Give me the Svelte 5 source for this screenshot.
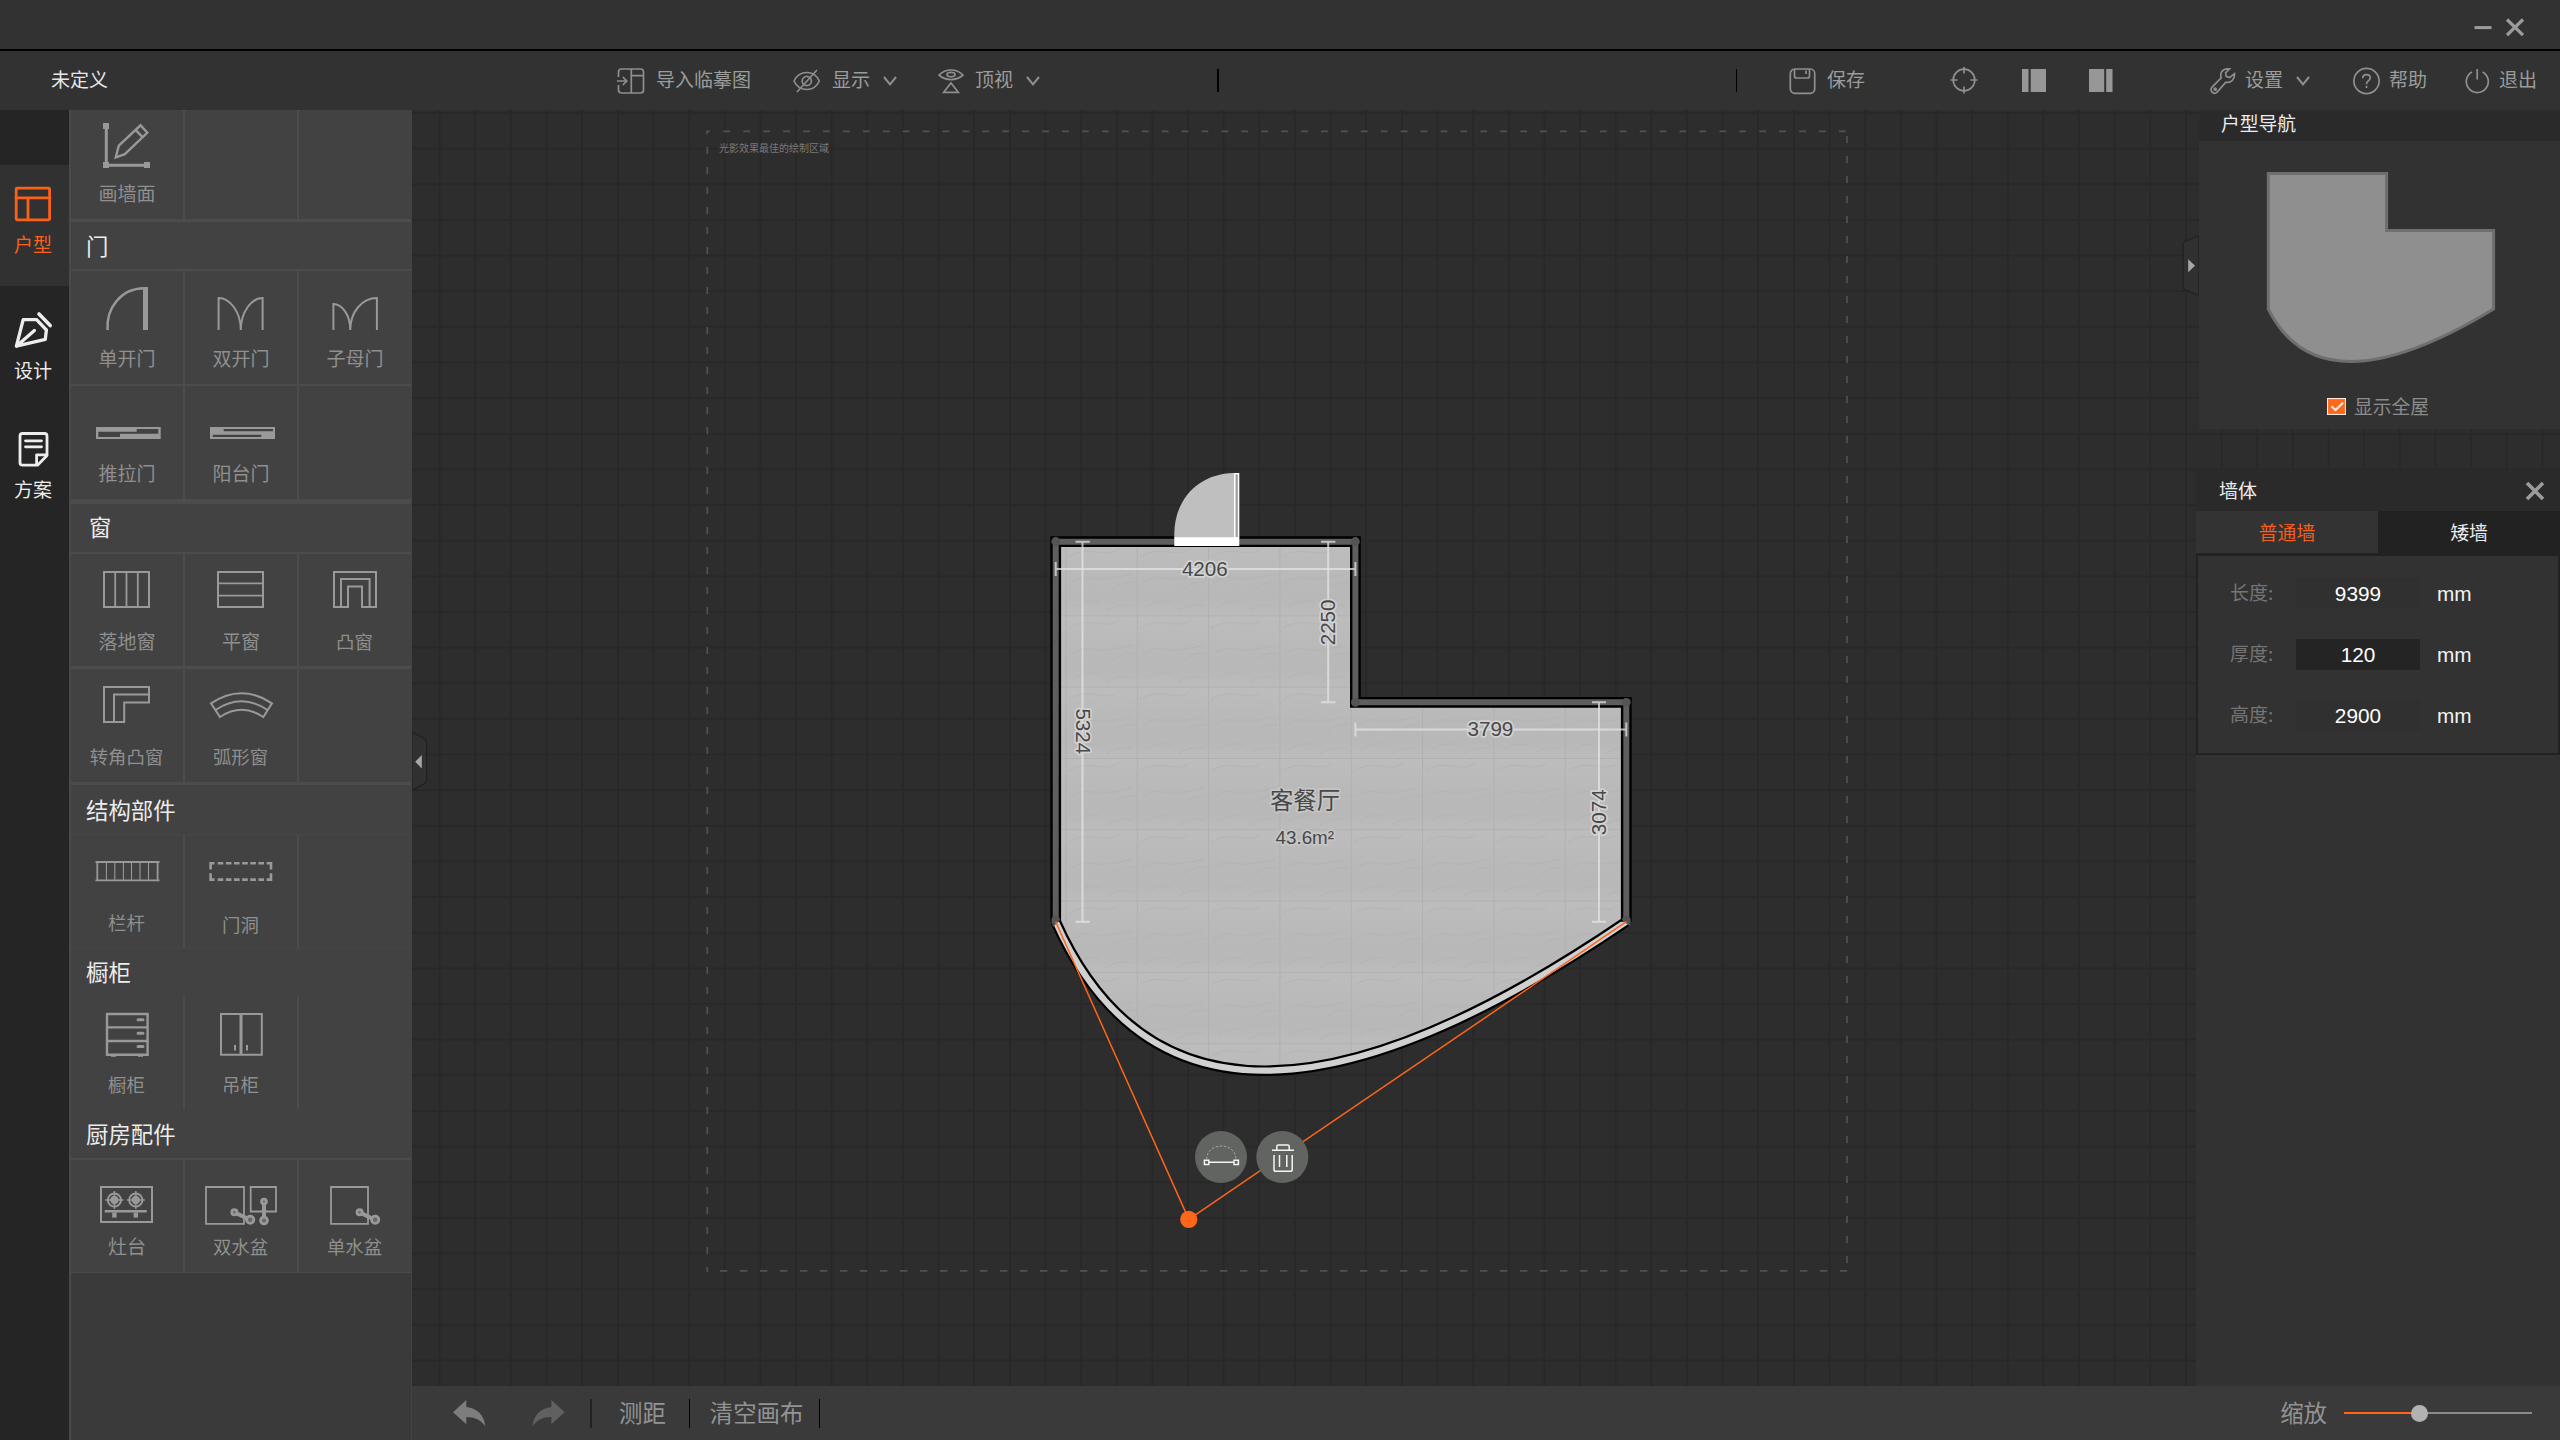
<script>
  const sections = [
    {
      title: '',
      rows: [{ h: 109, icon: 72, end: 3, cells: [{ id: 'draw', label: '画墙面' }, null, null] }]
    },
    {
      title: '门',
      headH: 47,
      line: 2,
      rows: [
        { h: 113, icon: 76, end: 2, cells: [{ id: 'door', label: '单开门' }, { id: 'double', label: '双开门' }, { id: 'mother', label: '子母门' }] },
        { h: 113, icon: 76, end: 5, cells: [{ id: 'slide', label: '推拉门' }, { id: 'balcony', label: '阳台门' }, null] }
      ]
    },
    {
      title: '窗',
      indent: true,
      headH: 48,
      line: 2,
      rows: [
        { h: 112, icon: 76, end: 3, cells: [{ id: 'french', label: '落地窗' }, { id: 'flat', label: '平窗' }, { id: 'bay', label: '凸窗', tight: true }] },
        { h: 113, icon: 76, end: 3, cells: [{ id: 'corner', label: '转角凸窗', tight: true }, { id: 'arc', label: '弧形窗', tight: true }, null] }
      ]
    },
    {
      title: '结构部件',
      headH: 49,
      line: 1,
      rows: [{ h: 113, icon: 76, end: 1, faint: true, cells: [{ id: 'rail', label: '栏杆', tight: true }, { id: 'opening', label: '门洞', tight: true, low: true }, null] }]
    },
    {
      title: '橱柜',
      raised: true,
      headH: 48,
      line: 0,
      rows: [{ h: 112, icon: 76, end: 0, cells: [{ id: 'cabinet', label: '橱柜', tight: true }, { id: 'wallcab', label: '吊柜', tight: true }, null] }]
    },
    {
      title: '厨房配件',
      headH: 49,
      line: 2,
      rows: [{ h: 112, icon: 75, end: 1, cells: [{ id: 'stove', label: '灶台' }, { id: 'sink2', label: '双水盆', tight: true }, { id: 'sink1', label: '单水盆', tight: true }] }]
    }
  ];

  const fields = [
    { label: '长度:', value: '9399' },
    { label: '厚度:', value: '120', editable: true },
    { label: '高度:', value: '2900' }
  ];

  const zoom = 40;
</script>

{#snippet chevron()}
  <svg class="chev" width="14" height="10" viewBox="0 0 14 10"><path d="M1 1L7 8.4L13 1" /></svg>
{/snippet}

{#snippet toolIcon(id)}
  {#if id === 'draw'}
    <path d="M35.3 16V55.3H76" stroke-width="3" />
    <path class="solid" d="M32 13h6v6h-6zM32 52h6v6h-6zM73 52h6v6h-6z" />
    <path d="M44.8 47.3L47.8 35.6L69.5 15.3L76.3 22.8L53.8 44.2ZM64.5 19.8L71.6 27.2" stroke-width="2.4" />
  {:else if id === 'door'}
    <path class="solid" d="M72 16h5v43h-5z" />
    <path d="M36.6 59C35 37 50 17.5 73 17.3" stroke-width="2.5" />
  {:else if id === 'double'}
    <path d="M33.6 59V27C45 27 55.8 41 55.8 59C55.8 41 66.5 27 77.6 27V59" />
  {:else if id === 'mother'}
    <path d="M34.4 59V33C43 33 51.3 44 51.3 59C51.3 41 63 27 77.9 27V59" />
  {:else if id === 'slide'}
    <path class="solid" fill-rule="evenodd" d="M25 41H89.7V53H25ZM65.7 43V45.7H27.3V51H49V47.7H87.3V43Z" />
  {:else if id === 'balcony'}
    <path class="solid" fill-rule="evenodd" d="M25 41H90V53H25ZM38.7 43V45.3H88V43ZM27.7 48.7V51H76.3V48.7Z" />
  {:else if id === 'french'}
    <path d="M33 18H78V53H33Z" />
    <path d="M44.2 18V53M55.5 18V53M66.8 18V53" stroke-width="1.8" />
  {:else if id === 'flat'}
    <path d="M33 18H78V53H33Z" />
    <path d="M33 29.3H78M33 41.7H78" stroke-width="1.8" />
  {:else if id === 'bay'}
    <path d="M35 53V18H77V53H63V32.5H49V53Z" />
    <path d="M42 53V25H70.6V53" />
  {:else if id === 'corner'}
    <path d="M33 18H78V33.4H53.2V53H33Z" />
    <path d="M78 25.6H43V53" />
  {:else if id === 'arc'}
    <path d="M26 34.3Q56.5 14 87 34.3L78.3 48Q56.7 33.5 35 48Z" />
    <path d="M30.5 41Q56.5 23.5 82.5 41" />
  {:else if id === 'rail'}
    <path d="M24.5 27H88.5M24.5 45.4H88.5M26.3 27V45M86.6 27V45" stroke-width="1.8" />
    <path d="M35.4 27V45M43.8 27V45M52.4 27V45M60.5 27V45M69 27V45M77.5 27V45" stroke-width="1.1" />
  {:else if id === 'opening'}
    <path d="M29.5 28.3H25.6V34.6M81.6 28.3H86V34.6M25.6 38.3V44.6H29.5M86 38.3V44.6H81.6" stroke-width="2.6" />
    <path d="M32.7 28.3H79M32.7 44.6H79" stroke-width="2.6" stroke-dasharray="5.6 2.55" />
  {:else if id === 'cabinet'}
    <path d="M36 17H76.6V57.8H36ZM36 30.4H76.6M36 44H76.6" stroke-width="2.4" />
    <path d="M67 22.7H72M67 36.2H72M67 49.4H72" stroke-width="3" stroke-linecap="round" />
    <path d="M40 59H45M67 59H72" stroke-width="1.4" />
  {:else if id === 'wallcab'}
    <path d="M36 17H76.8V57.8H36Z" />
    <path d="M56 17V57.8" stroke-width="3" />
    <path d="M50 48V53.4M62 48V53.4" />
  {:else if id === 'stove'}
    <path d="M30 27H81V62H30Z" />
    {#each [43.4, 64.8] as cx}
      <circle {cx} cy="40" r="6.6" stroke-width="2" />
      <circle class="solid" {cx} cy="40" r="4.2" />
      <path d="M{cx - 9} 40H{cx + 9}M{cx} 31V49" stroke-width="1.4" />
      <path d="M{cx} 52.5V57.6" stroke-width="4.4" />
    {/each}
    <path d="M33.7 51.3H75.8" stroke-width="2.4" />
  {:else if id === 'sink2'}
    <path d="M21 27H59V63.8H21ZM65.7 27H91V51.5H65.7Z" stroke-width="1.8" />
    <path d="M50 52.6L65 59.8M79 42V60" stroke-width="4" />
    <circle class="tap" cx="49.4" cy="52.3" r="2.6" />
    <circle class="tap" cx="65.2" cy="59.8" r="3.6" />
    <circle class="tap" cx="79" cy="41.6" r="2.4" />
    <circle class="tap" cx="79" cy="60.5" r="3.4" />
  {:else if id === 'sink1'}
    <path d="M32 27H69V63.8H32Z" stroke-width="1.8" />
    <path d="M61 52.6L76 59.8" stroke-width="4" />
    <circle class="tap" cx="60.6" cy="52.3" r="2.6" />
    <circle class="tap" cx="76.2" cy="59.8" r="3.6" />
  {/if}
{/snippet}

<div class="app">
  <header class="titlebar">
    <svg width="52" height="22" viewBox="0 0 52 22">
      <path d="M1.5 11.6H18.5" stroke-width="3" />
      <path d="M34 3.5L50 19.2M50 3.5L34 19.2" stroke-width="3.2" />
    </svg>
  </header>

  <nav class="toolbar">
    <span class="name">未定义</span>
    <div class="tool c3">
      <svg width="28" height="28" viewBox="0 0 28 28">
        <path d="M1.5 10V5Q1.5 2 4.5 2H23.5Q26.5 2 26.5 5V23Q26.5 26 23.5 26H4.5Q1.5 26 1.5 23V18M14.3 2V26M14.3 8.7H26.5M0 14H9.8M5.8 10L9.8 14L5.8 18" />
      </svg>
      <span>导入临摹图</span>
    </div>
    <div class="tool c4">
      <svg width="28" height="28" viewBox="0 0 28 28">
        <path d="M1 14Q5 5.5 13.8 5.5Q22.5 5.5 26.3 14Q22.5 22.5 13.8 22.5Q5 22.5 1 14ZM24 3L4 25" />
        <circle cx="13.8" cy="14" r="4.6" />
      </svg>
      <span>显示</span>
      {@render chevron()}
    </div>
    <div class="tool c5">
      <svg width="26" height="28" viewBox="0 0 26 28">
        <path d="M1 8Q6 3 13 3Q20 3 25 8Q20 12.6 13 12.6Q6 12.6 1 8ZM13 16L20.3 25.3H5.7Z" />
        <ellipse cx="13" cy="7.6" rx="4" ry="2.2" />
      </svg>
      <span>顶视</span>
      {@render chevron()}
    </div>
    <i class="sep c6"></i>
    <i class="sep c7"></i>
    <div class="tool c8">
      <svg width="27" height="28" viewBox="0 0 27 28">
        <rect x="1.3" y="2" width="24.4" height="24.3" rx="4.5" />
        <path d="M5.5 2V9Q5.5 11 7.5 11H18.5Q20.5 11 20.5 9V2M17 3.5V7" />
      </svg>
      <span>保存</span>
    </div>
    <div class="tool c9">
      <svg width="28" height="28" viewBox="0 0 28 28">
        <circle cx="14" cy="13" r="10.8" />
        <path d="M14 0V6.5M14 19.5V26.5M.5 13H7.5M20.5 13H27.5" />
      </svg>
    </div>
    <div class="tool c10">
      <svg width="25" height="24" viewBox="0 0 25 24"><path class="fill" d="M0 0H6.5V23H0ZM8.7 0H24V23H8.7Z" /></svg>
    </div>
    <div class="tool c11">
      <svg width="25" height="24" viewBox="0 0 25 24"><path class="fill" d="M0 0H15.2V23H0ZM17.2 0H23.5V23H17.2Z" /></svg>
    </div>
    <div class="tool c12">
      <svg width="26" height="28" viewBox="0 0 26 28">
        <path d="M17.8 1.8C12.5 1.8 9.5 6 11.2 10.8L1.9 20.3C.4 22 1 24.4 2.6 25.5C4.2 26.6 6.4 26.2 7.6 24.6L15.8 15.2C20.5 16.4 25 12.6 24.5 6.6L19.6 10.6L16.2 9.4L15.6 5.8L19.5 2Z" />
        <circle cx="5.2" cy="22.2" r="1" />
      </svg>
      <span class="near">设置</span>
      {@render chevron()}
    </div>
    <div class="tool c13">
      <svg width="28" height="28" viewBox="0 0 28 28">
        <circle cx="14.5" cy="14" r="12.6" />
        <path d="M10.8 11.2Q10.8 7.6 14.5 7.6Q18.2 7.6 18.2 10.8Q18.2 12.8 16.2 14Q14.5 15.2 14.5 17.3M14.5 18.8V21" />
      </svg>
      <span class="near">帮助</span>
    </div>
    <div class="tool c14">
      <svg width="25" height="28" viewBox="0 0 25 28">
        <path d="M7 4.9A11 11 0 1 0 17.6 4.9M12.2 2V12.5" />
      </svg>
      <span class="near">退出</span>
    </div>
  </nav>

  <div class="main">
    <aside class="rail">
      <div class="tab on">
        <svg width="42" height="44" viewBox="0 0 42 44">
          <rect x="4.2" y="6.2" width="33.4" height="31.6" rx="1" />
          <path d="M4 15.8H38M16 16V38" />
        </svg>
        <span>户型</span>
      </div>
      <div class="tab design">
        <svg width="42" height="44" viewBox="0 0 42 44">
          <path d="M4.4 38.2L11.2 11.6H24.6L34.4 22L33.3 31.4ZM4.4 38.2L22.4 22.6" stroke-width="3.3" />
          <path d="M27 6L38.2 17.6" stroke-width="3.6" />
        </svg>
        <span>设计</span>
      </div>
      <div class="tab scheme">
        <svg width="42" height="44" viewBox="0 0 42 44">
          <path d="M10.5 6.5H32.5Q35 6.5 35 9V28.5L25.5 38.2H10.5Q8 38.2 8 35.8V9Q8 6.5 10.5 6.5ZM24.6 38V27.8H35" />
          <path d="M13.5 13.8H29.5M13.5 19.8H29.5" />
        </svg>
        <span>方案</span>
      </div>
    </aside>

    <aside class="library">
      {#each sections as s}
        {#if s.title}
          <h3 class:indent={s.indent} class:raised={s.raised} style:height="{s.headH}px">{s.title}</h3>
          <div class="rule" class:faint={s.line === 1} style:height="{s.line}px"></div>
        {/if}
        {#each s.rows as r}
          <div class="row" style:height="{r.h}px">
            {#each r.cells as c}
              <div class="cell">
                {#if c}
                  <svg width="112" height={r.icon} viewBox="0 0 112 {r.icon}">{@render toolIcon(c.id)}</svg>
                  <span class:tight={c.tight} class:low={c.low}>{c.label}</span>
                {/if}
              </div>
            {/each}
          </div>
          <div class="rule" class:faint={r.faint} style:height="{r.end}px"></div>
        {/each}
      {/each}
    </aside>

    <div class="work">
      <div class="stage">
        <svg class="canvas" width="2148" height="1276" viewBox="412 110 2148 1276">
          <defs>
            <pattern id="grid" x="438.6" y="112" width="35.64" height="35.64" patternUnits="userSpaceOnUse">
              <path d="M1 0V35.64M0 1H35.64" stroke="#282828" stroke-width="2" fill="none" />
            </pattern>
            <linearGradient id="shade" x1="0" y1="0" x2="0" y2="1">
              <stop offset="0" stop-color="#bdbdbd" />
              <stop offset=".45" stop-color="#b9b9b9" />
              <stop offset=".75" stop-color="#b8b8b8" />
              <stop offset="1" stop-color="#bcbcbc" />
            </linearGradient>
            <pattern id="tile" x="1066.4" y="545" width="71.33" height="71.33" patternUnits="userSpaceOnUse">
              <rect width="71.4" height="71.4" fill="url(#shade)" />
              <path d="M2 12Q14 4 30 7T52 4M4 38Q16 30 26 33T66 29M46 44Q56 36 68 37M8 62Q20 54 34 57M40 66Q52 58 66 61" stroke="#b1b1b1" stroke-width=".8" fill="none" />
              <path d="M71 0V71.4M0 71H71.4" stroke="#aeaeae" stroke-width="1" />
            </pattern>
          </defs>
          <rect x="412" y="110" width="2148" height="1276" fill="#2d2d2d" />
          <rect x="412" y="110" width="2148" height="1276" fill="url(#grid)" />

          <g stroke="#525252" stroke-width="1.7" fill="none">
            <path d="M707 134V131.3H709.5" />
            <path d="M723.4 131.3H1847" stroke-dasharray="6.8 13.12" />
            <path d="M707.3 147V1272" stroke-dasharray="7 13" />
            <path d="M1847 136V1271" stroke-dasharray="7 13" />
            <path d="M720 1270.8H1847" stroke-dasharray="7.4 12.6" />
          </g>
          <text class="hint" x="719" y="152.4">光影效果最佳的绘制区域</text>

          <path d="M1055.7 541.7H1355.4V702.3H1626.3V921.7Q1188.6 1219.7 1055.7 921.7Z" fill="url(#tile)" />
          <path d="M1055.7 921.7Q1188.6 1219.7 1626.3 921.7" fill="none" stroke="#000" stroke-width="10.6" />
          <path d="M1055.7 921.7Q1188.6 1219.7 1626.3 921.7" fill="none" stroke="#d0d0d0" stroke-width="6.2" />
          <path d="M1055.7 921.7V541.7H1355.4V702.3H1626.3V921.7" fill="none" stroke="#000" stroke-width="10.8" />
          <path d="M1055.7 921.7V541.7H1355.4V702.3H1626.3V921.7" fill="none" stroke="#5e5e5e" stroke-width="6" />
          <g fill="#545454">
            <circle cx="1055.7" cy="541.5" r="4.4" />
            <circle cx="1355.4" cy="541.5" r="4.4" />
            <circle cx="1355.4" cy="702.3" r="4.4" />
            <circle cx="1626.3" cy="702.3" r="4.4" />
            <path d="M1051.3 920a4.4 4.4 0 0 1 8.8 0L1053 927ZM1622 920a4.4 4.4 0 0 1 8.8 0L1629.5 926Z" />
          </g>

          <path d="M1174.3 538V534C1174.3 500 1198 473.5 1234 473V538Z" fill="#bfbfbf" />
          <path d="M1234 473H1239.3V538H1234Z" fill="#fff" />
          <path d="M1235.6 474.4H1237.8V537H1235.6Z" fill="#9a9a9a" />
          <path d="M1174.3 537.3H1239.3V546H1174.3Z" fill="#fff" />

          <g stroke="#e4e4e4" stroke-opacity=".75" stroke-width="2" fill="none">
            <path d="M1055.7 569H1355.4M1055.7 562V576M1355.4 562V576" />
            <path d="M1082.5 541.7V921.7M1075.5 541.7H1089.8M1075.5 921.7H1089.8" />
            <path d="M1328.2 541.7V702.3M1321 541.7H1335.4M1321 702.3H1335.4" />
            <path d="M1355.4 729.5H1626.3M1355.4 722.5V736.5M1626.3 722.5V736.5" />
            <path d="M1599 702.3V921.7M1592 702.3H1606M1592 921.7H1606" />
          </g>
          <g class="dim">
            <text transform="translate(1204.8 568.5)" y="7">4206</text>
            <text transform="translate(1490.4 729)" y="7">3799</text>
            <text transform="translate(1327.8 622.4) rotate(-90)" y="7">2250</text>
            <text transform="translate(1598.8 812.3) rotate(-90)" y="7">3074</text>
            <text transform="translate(1083 731.3) rotate(90)" y="7">5324</text>
            <text class="room" x="1305" y="809">客餐厅</text>
            <text class="area" x="1304.8" y="843.8">43.6m²</text>
          </g>

          <path d="M1055.7 921.7L1188.8 1219.3L1626.3 921.7" fill="none" stroke="#ff651b" stroke-width="1.5" />
          <circle cx="1188.8" cy="1219.3" r="8.6" fill="#ff651b" />

          <circle cx="1221" cy="1157" r="26" fill="#626462" />
          <circle cx="1282.3" cy="1157" r="26" fill="#626462" />
          <g stroke="#f4f4f4" fill="none" stroke-width="1.5">
            <path d="M1209 1162.3H1233.8M1204.4 1160.2h4.4v4.4h-4.4zM1234 1160.2h4.4v4.4h-4.4z" />
            <path d="M1206.6 1159.5C1206.6 1141.5 1236 1141.5 1236 1159.5" stroke="#a4a6a4" stroke-width="1" stroke-dasharray="2.5 1.6" />
            <path d="M1272 1150.2H1294M1276.8 1150V1146.5Q1276.8 1145 1278.3 1145H1287.7Q1289.2 1145 1289.2 1146.5V1150M1274 1155V1169.5Q1274 1171.3 1275.8 1171.3H1290.4Q1292.2 1171.3 1292.2 1169.5V1155M1279.5 1155V1167M1286.8 1155V1167" />
          </g>

          <path d="M412 732L424.5 738.5Q426.6 740 426.6 742.5V780Q426.6 782.5 424.5 783.6L412 790Z" fill="#303030" stroke="#212121" stroke-width="1.2" />
          <path d="M421.8 755V768.4L415.2 761.7Z" fill="#a6a6a6" />
          <path d="M2199 236L2185.5 241Q2183 242.2 2183 244.5V286.5Q2183 288.8 2185.5 290L2199 295Z" fill="#303030" stroke="#212121" stroke-width="1.2" />
          <path d="M2188.2 259.2V272.2L2195 265.7Z" fill="#a6a6a6" />
        </svg>

        <div class="side">
          <section class="navi">
            <h4>户型导航</h4>
            <svg width="361" height="249" viewBox="2199 141 361 249">
              <path d="M2268.3 173.4H2386.6V230.6H2493.6V309Q2320.5 414 2268.3 309Z" fill="#8f8f8f" stroke="#6f6f6f" stroke-width="3" />
            </svg>
            <label>
              <svg width="19" height="17" viewBox="0 0 19 17"><rect width="19" height="17" fill="#ff671b" /><path d="M4.5 8.2L8.5 12L16 4.8" /></svg>
              <span>显示全屋</span>
            </label>
          </section>
          <section class="wall">
            <div class="whead">
              <span>墙体</span>
              <svg width="20" height="20" viewBox="0 0 20 20"><path d="M2 2L18 18M18 2L2 18" /></svg>
            </div>
            <div class="wtabs"><b class="on">普通墙</b><b>矮墙</b></div>
            <div class="wbox">
              {#each fields as f}
                <div class="field">
                  <span>{f.label}</span>
                  <div class="val" class:editable={f.editable}>{f.value}</div>
                  <em>mm</em>
                </div>
              {/each}
            </div>
          </section>
        </div>
      </div>

      <footer class="bottom">
        <svg class="undo" width="33" height="27" viewBox="0 0 33 27"><path d="M0 12.2L13.3 0V7Q30 9 32.4 26.3Q26 17 13.3 17V24.3Z" fill="#7d7d7d" /></svg>
        <svg class="redo" width="33" height="27" viewBox="0 0 33 27"><path d="M32.7 12.2L19.4 0V7Q2.7 9 .3 26.3Q6.7 17 19.4 17V24.3Z" fill="#606060" /></svg>
        <i class="soft"></i>
        <span>测距</span>
        <i></i>
        <span>清空画布</span>
        <i></i>
        <div class="zoom">
          <span>缩放</span>
          <div class="track">
            <div class="done" style:width="{zoom}%"></div>
            <div class="thumb"></div>
          </div>
        </div>
      </footer>
    </div>
  </div>
</div>

<style>
  :global(body) { background: #2d2d2d; }
  * { box-sizing: border-box; }
  .app {
    width: 2560px;
    height: 1440px;
    display: flex;
    flex-direction: column;
    overflow: hidden;
    font-family: "Noto Sans CJK SC", "Liberation Sans", sans-serif;
    font-size: 19px;
    line-height: 24px;
    color: #ececec;
    white-space: nowrap;
  }
  svg { display: block; flex: none; fill: none; }
  i { display: block; width: 1px; background: #000; }

  .titlebar {
    height: 51px;
    background: #323232;
    border-bottom: 2px solid #000;
    display: flex;
    justify-content: flex-end;
    padding: 16px 35px 0 0;
  }
  .titlebar svg { stroke: #9c9c9c; }

  .toolbar {
    height: 59px;
    background: #323232;
    display: grid;
    grid-template-columns: 50px 567px 176px 145px 279px 519px 53px 161px 72px 67px 120px 143px 113px 95px;
    align-items: center;
  }
  .toolbar .name { grid-column: 2; margin: -3px 0 0 1px; color: #e6e6e6; }
  .tool { display: flex; align-items: center; color: #9c9c9c; grid-row: 1; }
  .tool span { margin: -3px 0 0 11px; }
  .tool .near { margin-left: 9px; }
  .tool svg { stroke: #8f8f8f; stroke-width: 1.7; }
  .tool .fill { fill: #979797; stroke: none; }
  .tool .chev { margin-left: 13px; stroke-width: 2; }
  .sep { height: 23px; grid-row: 1; margin-top: -1px; }
  .c3 { grid-column: 3; }
  .c4 { grid-column: 4; }
  .c5 { grid-column: 5; }
  .c6 { grid-column: 6; width: 2px; }
  .c7 { grid-column: 7; }
  .c8 { grid-column: 8; }
  .c9 { grid-column: 9; }
  .c10 { grid-column: 10; }
  .c11 { grid-column: 11; }
  .c12 { grid-column: 12; padding-left: 1px; }
  .c13 { grid-column: 13; }
  .c14 { grid-column: 14; }

  .main { flex: 1; display: flex; min-height: 0; }

  .rail { width: 69px; background: #252525; padding-top: 55px; flex: none; }
  .tab { display: flex; flex-direction: column; align-items: flex-start; padding-left: 12px; }
  .tab svg { stroke: #ededed; stroke-width: 2.8; stroke-linejoin: round; stroke-linecap: round; }
  .tab span { margin: 6px 0 0 2px; }
  .tab.on { height: 121px; background: #313131; color: #fb6118; padding-top: 17px; }
  .tab.on svg { stroke: #fb6118; }
  .tab.design { padding-top: 22px; height: 119px; }
  .tab.scheme { padding-top: 22px; }

  .library {
    width: 343px;
    flex: none;
    background: #3a3a3a;
    border-left: 2px solid #494949;
    border-right: 1px solid #434343;
  }
  .library h3 {
    margin: 0;
    background: #424242;
    padding: 0 0 2px 15px;
    font-size: 22.4px;
    font-weight: 400;
    display: flex;
    align-items: center;
  }
  .library h3.indent { padding: 0 0 4px 18px; }
  .library h3.raised { padding-bottom: 4px; }
  .rule { background: #4c4c4c; }
  .rule.faint { background: #464646; }
  .row { display: grid; grid-template-columns: 114px 114px 112px; background: #424242; }
  .cell {
    display: flex;
    flex-direction: column;
    align-items: center;
    border-right: 2px solid #4c4c4c;
    color: #8f8f8f;
  }
  .cell:last-child { border-right: 0; }
  .cell svg { stroke: #999; stroke-width: 2; }
  .cell svg :global(.solid) { fill: #999; stroke: none; }
  .cell svg :global(.tap) { fill: #666; stroke-width: 2.8; }
  .cell span { margin-top: -1px; }
  .cell .tight { font-size: 18.4px; margin-right: 1px; }
  .cell .low { margin-top: 1px; }

  .work { flex: 1; display: flex; flex-direction: column; min-width: 0; }
  .stage { height: 1276px; display: grid; grid-template-columns: 2148px; }
  .canvas, .side { grid-area: 1 / 1; }
  .hint { font-size: 10px; fill: #7a7a7a; }
  .dim text {
    font-family: "Liberation Sans", sans-serif;
    font-size: 20.6px;
    text-anchor: middle;
    fill: #484848;
    stroke: #d2d2d2;
    stroke-width: 3.5px;
    stroke-linejoin: round;
    paint-order: stroke;
  }
  .dim .room { font-family: "Noto Sans CJK SC", sans-serif; font-size: 23.4px; stroke: #c6c6c6; }
  .dim .area { font-size: 18.8px; stroke: #c6c6c6; }

  .side {
    justify-self: end;
    width: 364px;
    display: flex;
    flex-direction: column;
    align-items: flex-end;
    gap: 41px;
  }
  .navi { width: 361px; height: 319px; background: #323232; }
  .navi h4 {
    margin: 0;
    height: 31px;
    background: #2a2a2a;
    font-size: 18.8px;
    line-height: 25px;
    font-weight: 400;
    padding-left: 22px;
  }
  .navi label { display: flex; align-items: center; gap: 8px; padding-left: 128px; margin-top: 4px; color: #8c8c8c; }
  .navi label svg { stroke: #ffe8dc; stroke-width: 2.2; }
  .navi label span { font-size: 18.8px; margin-top: 0; }
  .wall { width: 364px; flex: 1; background: #323232; }
  .whead {
    height: 41px;
    background: #2a2a2a;
    display: flex;
    justify-content: space-between;
    align-items: center;
    padding: 0 15px 0 23px;
  }
  .whead span { margin-top: -2px; }
  .whead svg { stroke: #9c9c9c; stroke-width: 3.6; }
  .wtabs { display: flex; height: 43px; background: #222; }
  .wtabs b { width: 182px; text-align: center; line-height: 41px; font-weight: 400; font-size: 18.8px; }
  .wtabs .on { background: #333; height: 42px; color: #f55e1b; }
  .wbox { height: 201px; border: 2px solid #222; padding-top: 22px; display: flex; flex-direction: column; gap: 30px; }
  .field { display: flex; align-items: center; height: 31px; color: #757575; }
  .field span { margin: -3px 0 0 32px; width: 66px; }
  .val {
    width: 124px;
    height: 31px;
    line-height: 31px;
    background: #303030;
    color: #fff;
    text-align: center;
    font-family: "Liberation Sans", sans-serif;
    font-size: 20.8px;
  }
  .val.editable { background: #242424; }
  .field em { font: 20.8px "Liberation Sans", sans-serif; color: #f2f2f2; margin-left: 17px; }

  .bottom {
    height: 54px;
    background: #3a3a3a;
    color: #939393;
    font-size: 23.4px;
    line-height: 28px;
    display: flex;
    align-items: center;
  }
  .bottom i { height: 29px; }
  .bottom i.soft { width: 2px; background: #222; margin-left: 25px; }
  .bottom > span { margin: -3px 23px 0 27px; }
  .bottom > span + i + span { margin: -3px 16px 0 20px; }
  .undo { margin-left: 41px; }
  .redo { margin-left: 46px; }
  .zoom { margin-left: auto; display: flex; align-items: center; gap: 17px; padding-right: 28px; }
  .zoom span { margin-top: -3px; }
  .track { width: 188px; height: 2px; background: #8a8a8a; display: flex; align-items: center; }
  .done { height: 2px; background: #ff651b; }
  .thumb { width: 17px; height: 17px; border-radius: 50%; background: #b2b2b2; flex: none; margin-left: -8px; }
</style>
